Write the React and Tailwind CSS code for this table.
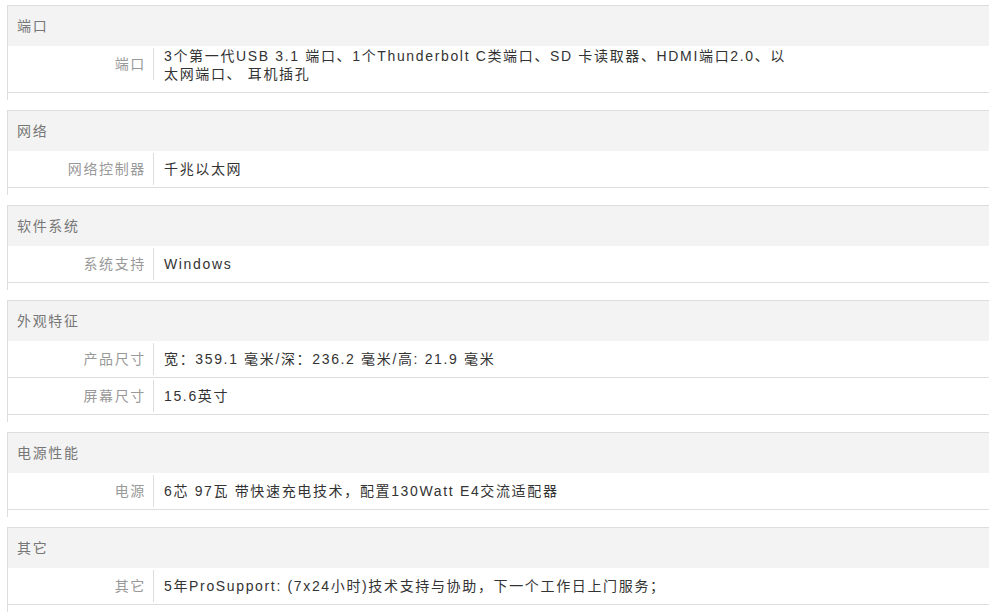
import React from 'react'

const sections = [
  {
    title: '端口',
    rows: [
      {
        label: '端口',
        lines: [
          '3个第一代USB 3.1 端口、1个Thunderbolt C类端口、SD 卡读取器、HDMI端口2.0、以',
          '太网端口、 耳机插孔',
        ],
      },
    ],
  },
  { title: '网络', rows: [{ label: '网络控制器', lines: ['千兆以太网'] }] },
  { title: '软件系统', rows: [{ label: '系统支持', lines: ['Windows'] }] },
  {
    title: '外观特征',
    rows: [
      { label: '产品尺寸', lines: ['宽：359.1 毫米/深：236.2 毫米/高: 21.9 毫米'] },
      { label: '屏幕尺寸', lines: ['15.6英寸'] },
    ],
  },
  { title: '电源性能', rows: [{ label: '电源', lines: ['6芯 97瓦 带快速充电技术，配置130Watt E4交流适配器'] }] },
  { title: '其它', rows: [{ label: '其它', lines: ['5年ProSupport: (7x24小时)技术支持与协助，下一个工作日上门服务；'] }] },
]

function SpecRow({ row }) {
  const multi = row.lines.length > 1
  return (
    <div className={`flex items-start border-b border-[#dddddd] ${multi ? 'h-[47px]' : 'h-[37px]'}`}>
      <div
        className={`w-[146px] shrink-0 h-8 leading-8 text-right pr-[7px] border-r border-[#dddddd] text-[#999999] ${multi ? 'mt-[2px]' : 'mt-[2px]'}`}
      >
        {row.label}
      </div>
      <div className={`pl-[10px] text-[#333333] ${multi ? 'mt-px leading-[18px]' : 'mt-[2px] leading-8'}`}>
        {row.lines.map((line, i) => (
          <div key={i}>{line}</div>
        ))}
      </div>
    </div>
  )
}

export default function App() {
  return (
    <div
      className="min-h-screen bg-white px-[7px] pt-[5px] text-[14px] tracking-[1.65px]"
      style={{ fontFamily: '"Liberation Sans", "Noto Sans CJK SC", sans-serif' }}
    >
      {sections.map((s) => (
        <div key={s.title} className="mb-[10px] border-l border-[#dddddd] pb-[7px]">
          <div className="border-t border-[#dddddd]">
            <div className="h-10 leading-10 bg-[#f3f3f3] pl-[9px] text-[#777777]">{s.title}</div>
            {s.rows.map((r) => (
              <SpecRow key={r.label} row={r} />
            ))}
          </div>
        </div>
      ))}
    </div>
  )
}
